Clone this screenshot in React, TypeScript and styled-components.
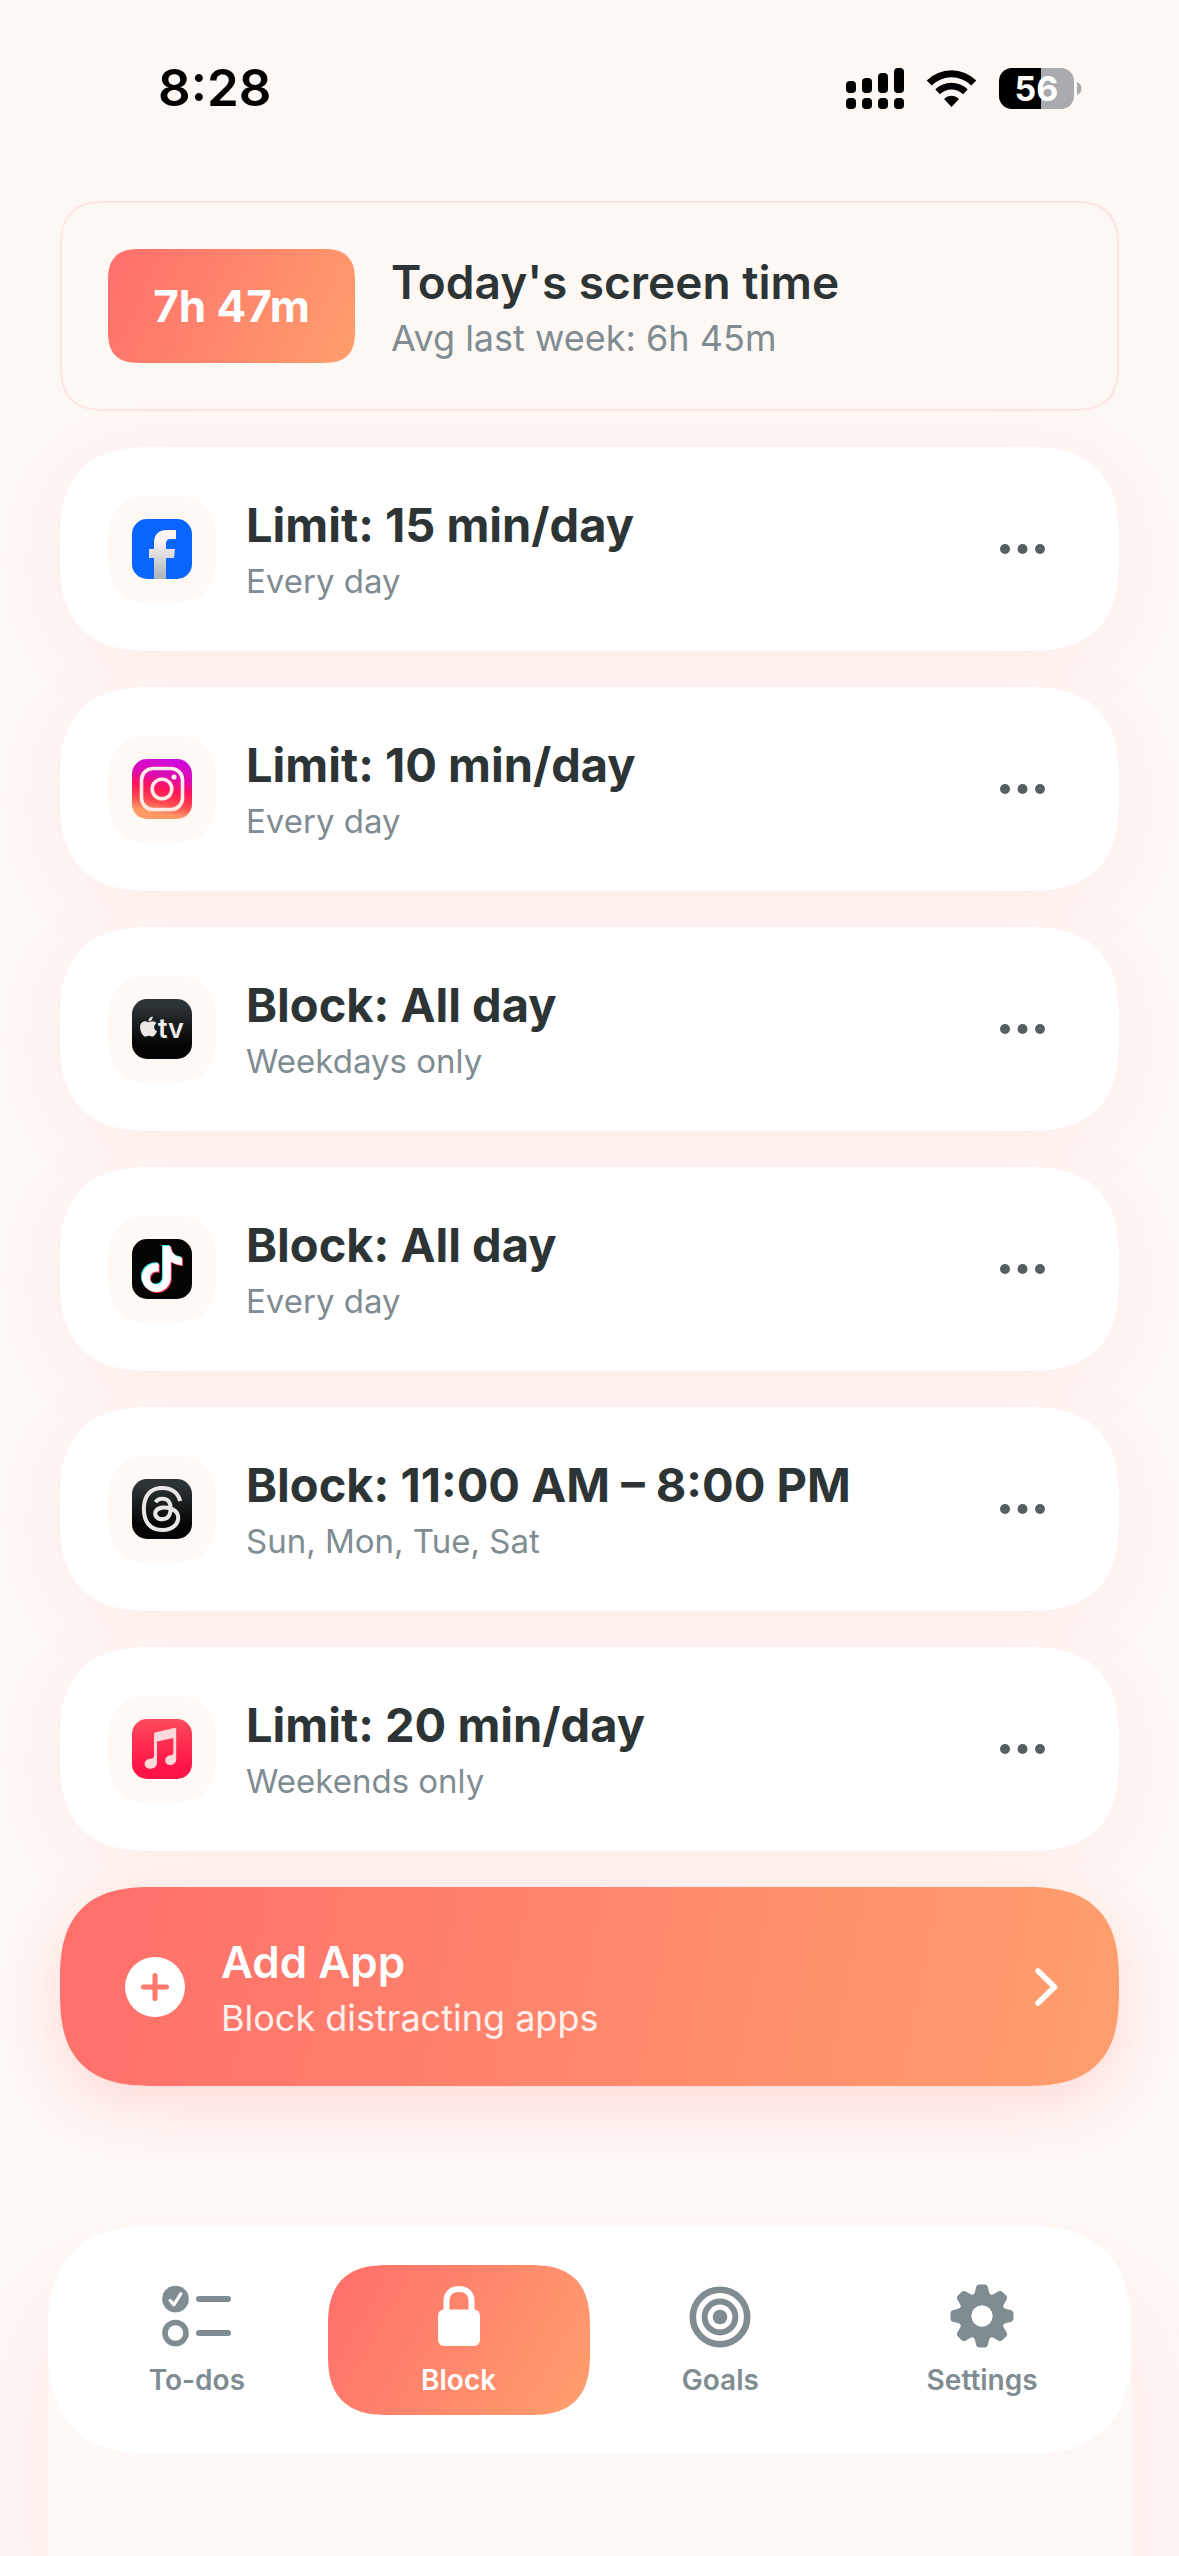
import React from "react";
import styled, { createGlobalStyle, css } from "styled-components";
import { SiTiktok, SiThreads } from "react-icons/si";
import { FaApple } from "react-icons/fa";

const color = {
  page: "#fef8f5",
  ink: "#2d3436",
  muted: "#7f8c92",
  tile: "#fff9f5",
  coral: "#ff6e6b",
  peach: "#ff9f6d",
};

const GlobalStyle = createGlobalStyle`
  *, *::before, *::after { box-sizing: border-box; }
  body {
    margin: 0;
    background: ${color.page};
    color: ${color.ink};
    font-family: Inter, "Liberation Sans", sans-serif;
  }
  button { font: inherit; color: inherit; border: 0; padding: 0; background: none; cursor: pointer; }
  h2, p, ul { margin: 0; padding: 0; }
  svg { display: block; }
`;

const smooth = (radius: number, wide: number) => css`
  border-radius: ${radius}px;
  @supports (corner-shape: superellipse(1.4)) {
    border-radius: ${wide}px;
    corner-shape: superellipse(1.4);
  }
`;

const sunset = (angle: number) => css`
  background: linear-gradient(${angle}deg, ${color.coral}, ${color.peach});
`;

const Screen = styled.div`
  display: flex;
  flex-direction: column;
  min-height: 100vh;
  overflow: hidden;
`;

const StatusBar = styled.header`
  display: flex;
  align-items: center;
  justify-content: space-between;
  height: 176px;
  padding: 0 97px 0 158px;
  color: #000;
`;

const Clock = styled.time`
  font-size: 51px;
  line-height: 60px;
  font-weight: 600;
`;

const StatusIcons = styled.div`
  display: flex;
  align-items: center;
  gap: 22px;
`;

const Battery = styled.div`
  display: flex;
  align-items: center;
  gap: 3px;
`;

const BatteryBody = styled.div<{ $level: number }>`
  display: grid;
  place-items: center;
  width: 75px;
  height: 41px;
  border-radius: 13px;
  background: linear-gradient(90deg, #000 ${(p) => p.$level}%, #a9abae ${(p) => p.$level}%);
  color: #fff;
  font-size: 34px;
  line-height: 41px;
  font-weight: 700;
`;

const Main = styled.main`
  display: flex;
  flex-direction: column;
  gap: 36px;
  padding: 25px 60px 0;
`;

const Summary = styled.section`
  display: flex;
  align-items: center;
  gap: 36px;
  padding: 46px;
  border: 2px solid #fde5e2;
  ${smooth(36, 46)}
`;

const TimeBadge = styled.div`
  display: grid;
  place-items: center;
  min-width: 247px;
  height: 114px;
  color: #fff;
  font-size: 44px;
  line-height: 56px;
  font-weight: 700;
  ${sunset(115)}
  ${smooth(24, 32)}
`;

const Copy = styled.div`
  display: flex;
  flex: 1;
  min-width: 0;
  flex-direction: column;
  gap: 7px;
  text-align: left;
`;

const titleSize = { small: 44, medium: 46, large: 47 };

const Title = styled.h2<{ $size: keyof typeof titleSize }>`
  font-size: ${(p) => titleSize[p.$size]}px;
  line-height: 56px;
  font-weight: ${(p) => (p.$size === "large" ? 700 : 600)};
`;

const Detail = styled.p<{ $large?: boolean; $light?: boolean }>`
  font-size: ${(p) => (p.$large ? 36 : 33)}px;
  line-height: 42px;
  color: ${(p) => (p.$light ? "#fff0ec" : color.muted)};
`;

const RuleList = styled.ul`
  display: flex;
  flex-direction: column;
  gap: 36px;
  list-style: none;
`;

const RuleCard = styled.li`
  display: flex;
  align-items: center;
  gap: 30px;
  padding: 48px;
  background: #fff;
  box-shadow: 0 12px 72px rgba(255, 107, 107, 0.08);
  ${smooth(72, 94)}
`;

const IconTile = styled.div`
  display: grid;
  place-items: center;
  flex: none;
  width: 108px;
  height: 108px;
  background: ${color.tile};
  ${smooth(36, 48)}
`;

const MoreButton = styled.button`
  display: grid;
  place-items: center;
  flex: none;
  width: 96px;
  height: 96px;
`;

const AddButton = styled.button`
  display: flex;
  align-items: center;
  gap: 36px;
  width: 100%;
  && {
    padding: 47px 60px 47px 65px;
    color: #fff;
    ${sunset(101)}
  }
  box-shadow: 0 18px 60px rgba(255, 107, 107, 0.22);
  ${smooth(72, 94)}
`;

const Dock = styled.footer`
  margin: auto 48px 0;
  padding-bottom: 102px;
  background: #fdf8f5;
  border-radius: 84px 84px 0 0;
  box-shadow: 0 72px 96px rgba(255, 107, 107, 0.1);
`;

const TabBar = styled.nav`
  display: grid;
  grid-template-columns: repeat(4, 1fr);
  padding: 39px 18px;
  background: #fff;
  ${smooth(84, 110)}
`;

const Tab = styled.button<{ $active?: boolean }>`
  display: flex;
  flex-direction: column;
  align-items: center;
  justify-content: center;
  gap: 14px;
  height: 150px;
  ${smooth(48, 62)}
  && {
    color: ${(p) => (p.$active ? "#fff" : color.muted)};
    font-size: 28px;
    line-height: 34px;
    font-weight: 600;
    ${(p) => p.$active && sunset(120)}
  }
`;

const SignalIcon = () => (
  <svg width="58" height="41" viewBox="0 0 58 41" aria-hidden="true">
    {[13, 10, 5, 0].map((top, i) => (
      <g key={top}>
        <rect x={i * 16} y={top} width="10" height={25 - top} rx="4" />
        <rect x={i * 16} y="30" width="10" height="11" rx="4" />
      </g>
    ))}
  </svg>
);

const WifiIcon = () => (
  <svg width="51" height="41" viewBox="0 0 51 41" aria-hidden="true">
    <path d="M0.7 12.4a35.500 35.500 0 0 1 49.600 0L45.300 17.400a28.300 28.300 0 0 0-39.600 0Z" />
    <path d="M9.300 21.500a23 23 0 0 1 32.400 0L37 26.300a16.300 16.300 0 0 0-23 0Z" />
    <path d="M18 30.900a10.800 10.800 0 0 1 15 0L25.500 39Z" />
  </svg>
);

const BatteryTip = () => (
  <svg width="5" height="13" viewBox="0 0 5 13" aria-hidden="true">
    <path d="M0 0c3 1 4.500 3.500 4.500 6.500S3 12 0 13Z" fill="#a9abae" />
  </svg>
);

type AppName = "facebook" | "instagram" | "tv" | "tiktok" | "threads" | "music";

const appFill: Record<AppName, string> = {
  facebook: "#0866ff",
  instagram: "url(#instagram-fill)",
  tv: "url(#dark-fill)",
  tiktok: "#050505",
  threads: "url(#dark-fill)",
  music: "url(#music-fill)",
};

const glyph: Record<AppName, React.ReactNode> = {
  facebook: (
    <path
      d="M22 60V39h-5V30h5v-6c0-9 5-13 13-13h9v9h-5c-4 0-5 2-5 5v5h9l-1 9h-8v21Z"
      fill="url(#silver)"
    />
  ),
  instagram: (
    <g fill="none" stroke="#ffece8" strokeWidth="3.600">
      <rect x="9.500" y="9.500" width="41" height="41" rx="11.500" />
      <circle cx="30" cy="30" r="9.800" />
      <circle cx="42" cy="18" r="2.600" fill="#ffece8" stroke="none" />
    </g>
  ),
  tv: (
    <>
      <FaApple x={5} y={16} size={23} color="#ece6e4" />
      <text x="26" y="39" fontSize="27" fontWeight="600" fill="#f1ebe9">
        tv
      </text>
    </>
  ),
  tiktok: (
    <>
      <SiTiktok x={6} y={6} size={46} color="#3df0ee" />
      <SiTiktok x={8} y={8} size={46} color="#fb2e58" />
      <SiTiktok x={7} y={7} size={46} color="#fff" />
    </>
  ),
  threads: <SiThreads x={7} y={7} size={46} color="#e9e7e7" />,
  music: (
    <path
      d="M22 15.500c0-1.300.8-2 2-2.300L42 9c1.400-.3 2.200.2 2.200 1.600V40c0 3.500-2.400 6-6 6-3 0-5-1.900-5-4.500 0-3 2-4.700 5.200-5.200 2.200-.3 3-1 3-3V19L25 22.600v21c0 3.600-2.600 6.200-6.400 6.200-3.400 0-6-2-6-4.800 0-3 2.300-4.800 5.700-5.200 2.700-.3 3.700-1 3.700-3Z"
      fill="#ffd9d9"
    />
  ),
};

const AppIcon = ({ app }: { app: AppName }) => (
  <svg width="60" height="60" viewBox="0 0 60 60" aria-hidden="true">
    <defs>
      <linearGradient id="instagram-fill" x1="0.600" y1="0" x2="0.400" y2="1">
        <stop offset="0" stopColor="#cf0add" />
        <stop offset="0.280" stopColor="#dc0cb4" />
        <stop offset="0.500" stopColor="#ff1457" />
        <stop offset="0.720" stopColor="#ff4a50" />
        <stop offset="0.900" stopColor="#ff9a66" />
      </linearGradient>
      <linearGradient id="dark-fill" x1="0" y1="0" x2="0" y2="1">
        <stop offset="0.100" stopColor="#2d3436" />
        <stop offset="0.750" stopColor="#050505" />
      </linearGradient>
      <linearGradient id="music-fill" x1="0" y1="0" x2="0" y2="1">
        <stop offset="0" stopColor="#fd4a5c" />
        <stop offset="0.800" stopColor="#ff1447" />
      </linearGradient>
      <linearGradient id="silver" x1="0" y1="0" x2="0" y2="1">
        <stop offset="0.200" stopColor="#fff4f2" />
        <stop offset="1" stopColor="#aab3ba" />
      </linearGradient>
    </defs>
    <rect width="60" height="60" rx="15" fill={appFill[app]} />
    {glyph[app]}
  </svg>
);

const MoreIcon = () => (
  <svg width="46" height="10" viewBox="0 0 46 10" fill="#565f62" aria-hidden="true">
    <circle cx="5" cy="5" r="5" />
    <circle cx="22.500" cy="5" r="5" />
    <circle cx="40" cy="5" r="5" />
  </svg>
);

const PlusIcon = () => (
  <svg width="60" height="60" viewBox="0 0 60 60" aria-hidden="true">
    <circle cx="30" cy="30" r="30" fill="#fff" />
    <path d="M30 18.500v23M18.500 30h23" stroke="#ff7a6b" strokeWidth="5" strokeLinecap="round" />
  </svg>
);

const ChevronIcon = () => (
  <svg width="24" height="38" viewBox="0 0 24 38" fill="none" aria-hidden="true">
    <path
      d="M3 3l16.500 16L3 35"
      stroke="#fff"
      strokeWidth="5.500"
      strokeLinecap="round"
      strokeLinejoin="round"
    />
  </svg>
);

const TodosIcon = () => (
  <svg width="69" height="66" viewBox="0 0 69 66" fill="none" aria-hidden="true">
    <circle cx="13.500" cy="16" r="13.300" fill="currentColor" />
    <path
      d="M8.200 17.500l3.600 4.300 7-11"
      stroke="#fff"
      strokeWidth="3.200"
      strokeLinecap="round"
      strokeLinejoin="round"
    />
    <circle cx="13.500" cy="50" r="10.500" stroke="currentColor" strokeWidth="5.600" />
    <path d="M37 16h29M37 50h29" stroke="currentColor" strokeWidth="6" strokeLinecap="round" />
  </svg>
);

const LockIcon = () => (
  <svg width="42" height="66" viewBox="0 0 42 66" fill="none" aria-hidden="true">
    <path d="M8.500 30V18c0-7.500 5-12 12.500-12s12.500 4.500 12.500 12v12" stroke="#fff" strokeWidth="6" />
    <rect y="26.500" width="42" height="36.500" rx="6" fill="#fff" />
  </svg>
);

const GoalsIcon = () => (
  <svg width="62" height="66" viewBox="0 0 62 66" fill="none" aria-hidden="true">
    <g stroke="currentColor">
      <circle cx="31" cy="34" r="27.200" strokeWidth="6.600" />
      <circle cx="31" cy="34" r="15.400" strokeWidth="6" />
    </g>
    <circle cx="31" cy="34" r="7.300" fill="currentColor" />
  </svg>
);

const GearIcon = () => (
  <svg width="64" height="66" viewBox="0 0 64 66" aria-hidden="true">
    <g transform="translate(32 33)" fill="currentColor">
      {[0, 45, 90, 135, 180, 225, 270, 315].map((turn) => (
        <path
          key={turn}
          transform={`rotate(${turn})`}
          d="M-12-19Q-7.500-21-6.800-25L-6-28.500Q-5.200-31.500-2.500-31.500H2.500Q5.200-31.500 6-28.500L6.800-25Q7.500-21 12-19V-12H-12Z"
        />
      ))}
      <circle r="16.500" fill="none" stroke="currentColor" strokeWidth="12" />
    </g>
    <circle cx="32" cy="33" r="10.500" fill="#fff" />
  </svg>
);

const rules: { app: AppName; label: string; title: string; days: string }[] = [
  { app: "facebook", label: "Facebook", title: "Limit: 15 min/day", days: "Every day" },
  { app: "instagram", label: "Instagram", title: "Limit: 10 min/day", days: "Every day" },
  { app: "tv", label: "Apple TV", title: "Block: All day", days: "Weekdays only" },
  { app: "tiktok", label: "TikTok", title: "Block: All day", days: "Every day" },
  { app: "threads", label: "Threads", title: "Block: 11:00 AM – 8:00 PM", days: "Sun, Mon, Tue, Sat" },
  { app: "music", label: "Music", title: "Limit: 20 min/day", days: "Weekends only" },
];

const tabs = [
  { name: "To-dos", Icon: TodosIcon },
  { name: "Block", Icon: LockIcon },
  { name: "Goals", Icon: GoalsIcon },
  { name: "Settings", Icon: GearIcon },
];

export default function App() {
  const [current, setCurrent] = React.useState("Block");
  return (
    <>
      <GlobalStyle />
      <Screen>
        <StatusBar>
          <Clock>8:28</Clock>
          <StatusIcons>
            <SignalIcon />
            <WifiIcon />
            <Battery>
              <BatteryBody $level={56}>56</BatteryBody>
              <BatteryTip />
            </Battery>
          </StatusIcons>
        </StatusBar>

        <Main>
          <Summary>
            <TimeBadge>7h 47m</TimeBadge>
            <Copy>
              <Title $size="medium">Today's screen time</Title>
              <Detail $large>Avg last week: 6h 45m</Detail>
            </Copy>
          </Summary>

          <RuleList>
            {rules.map((rule) => (
              <RuleCard key={rule.app}>
                <IconTile>
                  <AppIcon app={rule.app} />
                </IconTile>
                <Copy>
                  <Title $size="large">{rule.title}</Title>
                  <Detail>{rule.days}</Detail>
                </Copy>
                <MoreButton aria-label={`${rule.label} options`}>
                  <MoreIcon />
                </MoreButton>
              </RuleCard>
            ))}
          </RuleList>

          <AddButton>
            <PlusIcon />
            <Copy>
              <Title $size="small">Add App</Title>
              <Detail $large $light>
                Block distracting apps
              </Detail>
            </Copy>
            <ChevronIcon />
          </AddButton>
        </Main>

        <Dock>
          <TabBar>
            {tabs.map(({ name, Icon }) => (
              <Tab key={name} $active={name === current} onClick={() => setCurrent(name)}>
                <Icon />
                {name}
              </Tab>
            ))}
          </TabBar>
        </Dock>
      </Screen>
    </>
  );
}
